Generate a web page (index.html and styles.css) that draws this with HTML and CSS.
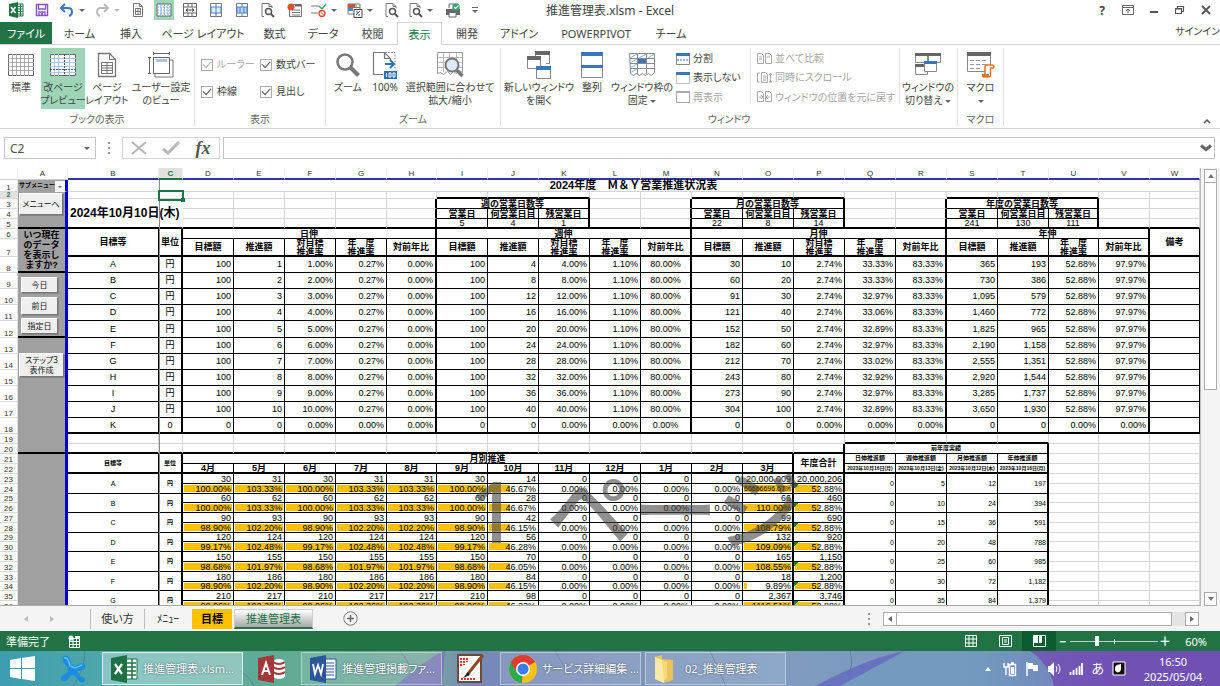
FILE: index.html
```html
<!DOCTYPE html>
<html lang="ja">
<head>
<meta charset="utf-8">
<title>推進管理表.xlsm - Excel</title>
<link rel="stylesheet" href="styles.css">
</head>
<body>
<div class="app">

<header class="titlebar">
  <div class="qat">
    <span class="q"><svg width="16" height="16" viewBox="0 0 16 16"><path d="M9 2h6v12H9" fill="#fff" stroke="#217346"/><path d="M9.500 4.500h5M9.500 7h5M9.500 9.500h5M9.500 12h5M12.500 2v12" stroke="#217346"/><path d="M1 2l9-2v16l-9-2z" fill="#217346"/><path d="M3 5l4.500 6M7.500 5L3 11" stroke="#fff" stroke-width="1.500"/></svg></span>
    <button class="q" aria-label="上書き保存"><svg width="14" height="14" viewBox="0 0 14 14"><path d="M1.500 1.500h11v11h-11z" fill="#fff" stroke="#8a55c0" stroke-width="1.500"/><path d="M3.500 2v4h7V2M4 13V9h6v4" fill="none" stroke="#8a55c0" stroke-width="1.300"/><path d="M7 10v3" stroke="#8a55c0" stroke-width="2"/></svg></button>
    <button class="q split" aria-label="元に戻す"><svg width="16" height="14" viewBox="0 0 16 14"><path d="M6 1L2 5l4 4M2.500 5H9q4 0 4 4 0 3-3 4" fill="none" stroke="#3a76bd" stroke-width="2"/></svg><i class="caret"></i></button>
    <button class="q split dim" aria-label="やり直し"><svg width="16" height="14" viewBox="0 0 16 14"><path d="M10 1l4 4-4 4M13.500 5H7Q3 5 3 9q0 3 3 4" fill="none" stroke="#bbb" stroke-width="2"/></svg><i class="caret"></i></button>
    <button class="q" aria-label="ページ レイアウト"><svg width="12" height="14" viewBox="0 0 12 14"><path d="M1.500.500h6l3 3v10h-9zM7.500.500v3h3M3.500 5.500h5v6h-5zM3.500 8.500h5M6 5.500v6" fill="none" stroke="#777"/></svg></button>
    <button class="q on" aria-label="改ページ プレビュー"><svg width="16" height="14" viewBox="0 0 16 14"><path d="M1 1h14v12H1z" fill="#fff" stroke="#666"/><path d="M1 4h14M1 7h14M1 10h14M5 1v12M8.500 1v12M12 1v12" stroke="#7aa5d6" stroke-dasharray="2 1"/></svg></button>
    <button class="q" aria-label="横方向に結合"><svg width="14" height="14" viewBox="0 0 14 14"><path d="M.500.500h13v13H.500zM.500 4h13M.500 10h13M5 .500V4M9 .500V4M5 10v3.500M9 10v3.500" fill="none" stroke="#666"/><path d="M3 7h8M5 5.500L3 7l2 1.500M9 5.500L11 7 9 8.500" fill="none" stroke="#444"/></svg></button>
    <button class="q" aria-label="セルの結合"><svg width="12" height="14" viewBox="0 0 12 14"><path d="M.500.500h11v13H.500zM6 .500V4M6 10v3.500" fill="none" stroke="#777"/><path d="M1 4h10v6H1z" fill="#dceafb" stroke="#4a87c9"/><path d="M6 4v6" stroke="#4a87c9"/></svg></button>
    <button class="q" aria-label="結合の解除"><svg width="12" height="14" viewBox="0 0 12 14"><path d="M.500.500h11v13H.500zM6 .500V4M6 10v3.500" fill="none" stroke="#777"/><path d="M1 4h10v6H1z" fill="#b7d3f3" stroke="#4a87c9"/><path d="M4 4v6M8 4v6" stroke="#4a87c9"/></svg></button>
    <button class="q" aria-label="印刷プレビュー"><svg width="14" height="15" viewBox="0 0 14 15"><path d="M3 13.500H1V.500h7l3 3V5M8 .500v3h3" fill="none" stroke="#777"/><circle cx="7.500" cy="8.500" r="3" fill="#fff" stroke="#555" stroke-width="1.500"/><path d="M10 11l3 3" stroke="#555" stroke-width="2"/></svg></button>
    <button class="q" aria-label="マクロの記録"><svg width="15" height="14" viewBox="0 0 15 14"><path d="M2.500 1.500h12v12h-12zM5 7h8M5 9.500h8M5 12h8" fill="none" stroke="#777"/><circle cx="4" cy="4" r="3.500" fill="#d8502e"/><path d="M8 2.500h6" stroke="#666" stroke-width="2"/></svg></button>
    <button class="q split wide" aria-label="エラー チェック"><svg width="16" height="14" viewBox="0 0 16 14"><path d="M0 3h8M0 10h7" stroke="#777"/><path d="M8 3l3 3 4-5" fill="none" stroke="#3e9e78" stroke-width="1.500"/><circle cx="11" cy="10.500" r="3" fill="#fff" stroke="#d8502e" stroke-width="1.300"/><path d="M9 8.500l4 4" stroke="#d8502e"/></svg><i class="caret"></i></button>
    <button class="q split wide" aria-label="条件付き書式"><svg width="16" height="15" viewBox="0 0 16 15"><path d="M1 1h12v10H1z" fill="#fff" stroke="#777"/><path d="M1 1h7v3H1z" fill="#d8502e"/><path d="M1 5h5v3H1z" fill="#4a87c9"/><path d="M9 1v4M1 4.500h12" stroke="#777"/><path d="M7 6.500h8v8H7z" fill="#fff" stroke="#444"/><path d="M9 12l4-4M9 9h2M11 12h2" stroke="#444"/></svg><i class="caret"></i></button>
    <button class="q" aria-label="検索"><svg width="14" height="15" viewBox="0 0 14 15"><path d="M3 13.500H1V.500h7l3 3V5M8 .500v3h3" fill="none" stroke="#777"/><circle cx="7.500" cy="8.500" r="3" fill="#fff" stroke="#555" stroke-width="1.500"/><path d="M10 11l3 3" stroke="#555" stroke-width="2"/></svg></button>
    <button class="q split" aria-label="プレビュー"><svg width="14" height="15" viewBox="0 0 14 15"><path d="M3 13.500H1V.500h7l3 3V5M8 .500v3h3" fill="none" stroke="#777"/><circle cx="7.500" cy="8.500" r="3" fill="#fff" stroke="#555" stroke-width="1.500"/><path d="M10 11l3 3" stroke="#555" stroke-width="2"/></svg><i class="caret"></i></button>
    <button class="q" aria-label="クイック印刷"><svg width="16" height="15" viewBox="0 0 16 15"><path d="M4 5V1h5" fill="none" stroke="#666"/><path d="M1 6h14v6H1z" fill="#666"/><path d="M4 9.500h7V14H4z" fill="#fff" stroke="#666"/><circle cx="11" cy="4" r="3.800" fill="#3e9e78"/><path d="M9 4l1.500 1.500 3-3" fill="none" stroke="#fff" stroke-width="1.200"/></svg></button>
    <button class="q tiny" aria-label="カスタマイズ"><svg width="8" height="8" viewBox="0 0 8 8"><path d="M1 1.500h6" stroke="#666"/><path d="M1 4h6L4 7z" fill="#666"/></svg></button>
  </div>
  <div class="doc-title">推進管理表.xlsm - Excel</div>
  <div class="winctl">
    <button class="help" aria-label="ヘルプ">?</button>
    <button aria-label="リボンの表示オプション"><svg width="12" height="10" viewBox="0 0 12 10"><path d="M.500.500h11v9H.500zM.500 2.500h11M6 8V4.500M4 6l2-2 2 2" fill="none" stroke="#666"/></svg></button>
    <button aria-label="最小化"><svg width="10" height="10" viewBox="0 0 10 10"><path d="M1 7h8" stroke="#555" stroke-width="2"/></svg></button>
    <button aria-label="元のサイズに戻す"><svg width="10" height="10" viewBox="0 0 10 10"><path d="M.500 3.500h6v5h-6zM2.500 3.500v-2h6v5h-2M2.500 1.500h6M.500 4h6" fill="none" stroke="#555" stroke-width="1.200"/></svg></button>
    <button aria-label="閉じる"><svg width="10" height="10" viewBox="0 0 10 10"><path d="M1 1l8 8M9 1L1 9" stroke="#555" stroke-width="1.800"/></svg></button>
  </div>
</header>

<nav class="tabs">
  <button class="file">ファイル</button><button>ホーム</button><button>挿入</button><button>ページ レイアウト</button><button>数式</button><button>データ</button><button>校閲</button><button class="active">表示</button><button>開発</button><button>アドイン</button><button class="latin">POWERPIVOT</button><button>チーム</button>
  <a class="signin" href="#">サインイン</a>
</nav>

<section class="ribbon">
  <div class="group g1">
    <div class="tools">
      <button class="big w40"><svg width="28" height="26" viewBox="0 0 28 26"><path d="M1.500 2.500h25v21h-25z" fill="#fff" stroke="#666"/><path d="M1 6.500h26M1 10.500h26M1 14.500h26M1 18.500h26M5.500 2v22M9.500 2v22M13.500 2v22M17.500 2v22M21.500 2v22" stroke="#aaa"/></svg><span>標準</span></button>
      <button class="big w44 on"><svg width="28" height="26" viewBox="0 0 28 26"><path d="M1.500 2.500h25v21h-25z" fill="#f4f9ff" stroke="#666"/><path d="M1 6.500h26M1 10.500h26M1 14.500h26M1 20.500h26M5.500 2v22M9.500 2v22M20.500 2v22" stroke="#a9c7e8"/><path d="M1 17.500h26M15.500 2v22" stroke="#555" stroke-dasharray="2 1"/></svg><span>改ページ<br>プレビュー</span></button>
      <button class="big w44"><svg width="22" height="26" viewBox="0 0 22 26"><path d="M2.500 1.500h11l6 6v17h-17z" fill="#fff" stroke="#777" stroke-width="1.300"/><path d="M13.500 1.500v6h6" fill="none" stroke="#777"/><path d="M5.500 10.500h11v11h-11zM5.500 13.500h11M5.500 16h11M5.500 18.500h11M11 10.500v11" fill="none" stroke="#777"/></svg><span>ページ<br>レイアウト</span></button>
      <button class="big w62"><svg width="28" height="26" viewBox="0 0 28 26"><path d="M8 6v19h18V8h-3" fill="#fff" stroke="#777"/><path d="M6.500 5.500h16v16h-16z" fill="#fff" stroke="#666"/><path d="M9 7h11v3H9z" fill="#a9c4e6"/><path d="M6 1.500h17M6.500 0v3M22.500 0v3M2.500 5v17M1 5.500h3M1 21.500h3" stroke="#666"/></svg><span>ユーザー設定<br>のビュー</span></button>
    </div>
    <div class="caption">ブックの表示</div>
  </div>
  <div class="group g2">
    <div class="checks">
      <label class="off"><input type="checkbox" checked disabled>ルーラー</label>
      <label><input type="checkbox" checked>数式バー</label>
      <label><input type="checkbox" checked>枠線</label>
      <label><input type="checkbox" checked>見出し</label>
    </div>
    <div class="caption">表示</div>
  </div>
  <div class="group g3">
    <div class="tools">
      <button class="big w32"><svg width="26" height="26" viewBox="0 0 26 26"><circle cx="10" cy="10" r="7.500" fill="#fff" stroke="#777" stroke-width="2.500"/><path d="M15.500 15.500l8 8" stroke="#777" stroke-width="4"/></svg><span>ズーム</span></button>
      <button class="big w42"><svg width="26" height="28" viewBox="0 0 26 28"><path d="M11 23.500H1.500v-22h11l6 6V10M12.500 1.500v6h6" fill="#fff" stroke="#777" stroke-width="1.200"/><path d="M13 1.500h10v18" fill="none" stroke="#999" stroke-dasharray="2 1"/><path d="M13 13h9M18 9l4 4-4 4" fill="none" stroke="#2f6fba" stroke-width="2"/><path d="M12 20h13v8H12z" fill="#2f6fba"/><path d="M14.500 22v4M17 22h2v4h-2zM21 22h2v4h-2z" fill="none" stroke="#fff"/></svg><span class="latin">100%</span></button>
      <button class="big w88"><svg width="28" height="28" viewBox="0 0 28 28"><path d="M1.500 1.500h25v20l-3-2-3 3-3-2-3 3-3-3-4 3-3-2-3 1z" fill="#fff" stroke="#999"/><path d="M2 6.500h24M2 11.500h24M2 16.500h24M7.500 2v19M13.500 2v19M20.500 2v19" stroke="#bbb"/><circle cx="16" cy="14" r="6.500" fill="#dceafb" stroke="#777" stroke-width="2"/><path d="M20.500 19l6 6" stroke="#777" stroke-width="3.500"/></svg><span>選択範囲に合わせて<br>拡大/縮小</span></button>
    </div>
    <div class="caption">ズーム</div>
  </div>
  <div class="group g4">
    <div class="tools">
      <button class="big w70"><svg width="26" height="28" viewBox="0 0 26 28"><path d="M9.500 9V1.500h14v11H20" fill="#fff" stroke="#888"/><path d="M9 0h15v4H9z" fill="#666"/><path d="M1.500 6.500h13v11h-13z" fill="#fff" stroke="#888"/><path d="M1 5h14v4H1z" fill="#666"/><path d="M10.500 16.500h14v11h-14z" fill="#fff" stroke="#888"/><path d="M10 15h15v4H10z" fill="#3a76bd"/></svg><span>新しいウィンドウ<br>を開く</span></button>
      <button class="big w36"><svg width="22" height="26" viewBox="0 0 22 26"><path d="M.500.500h21v25H.500z" fill="#fff" stroke="#888"/><path d="M0 0h22v4H0zM0 13h22v3H0z" fill="#3a76bd"/></svg><span>整列</span></button>
      <button class="big w64"><svg width="28" height="26" viewBox="0 0 28 26"><path d="M1.500 1.500h25v19l-3 3-3-2-3 2-3-2-3 2-3-2-3 2-3-2z" fill="#fff" stroke="#888"/><path d="M2 6.500h24M2 11.500h24M2 16.500h24M9.500 2v20M18.500 2v20" stroke="#888"/><path d="M2 6l7-4M2 11l7-4M2 16l7-4M2 21l7-4M11 6l7-4M20 6l6-4" stroke="#8db3dd"/><path d="M10 7h8v4h-8z" fill="#3a76bd"/></svg><span>ウィンドウ枠の<br>固定 <i class="caret"></i></span></button>
      <div class="stack">
        <button><svg width="14" height="12" viewBox="0 0 14 12"><path d="M.500.500h13v11H.500z" fill="#fff" stroke="#888"/><path d="M0 0h14v3H0z" fill="#3a76bd"/><path d="M1 7h12" stroke="#3a76bd" stroke-dasharray="2 1"/></svg>分割</button>
        <button><svg width="14" height="12" viewBox="0 0 14 12"><path d="M.500.500h13v11H.500z" fill="#fff" stroke="#888" stroke-dasharray="1 1"/><path d="M0 0h14v3H0z" fill="#3a76bd"/></svg>表示しない</button>
        <button class="off"><svg width="14" height="12" viewBox="0 0 14 12"><path d="M.500.500h13v11H.500z" fill="#fff" stroke="#aaa"/><path d="M0 0h14v2H0z" fill="#aaa"/></svg>再表示</button>
      </div>
      <div class="stack second">
        <button class="off"><svg width="15" height="12" viewBox="0 0 15 12"><path d="M.500.500h4l2 2v8h-6zM8.500.500h4l2 2v8h-6zM2 4h3M2 6h3M10 4h3" fill="none" stroke="#aaa"/></svg>並べて比較</button>
        <button class="off"><svg width="15" height="12" viewBox="0 0 15 12"><path d="M3 1H.500v9H3M4.500.500h4l2 2v8h-6zM6 4h3M6 6h3M6 8h3M13.500 1v10M12 3l1.500-2L15 3M12 9l1.500 2L15 9" fill="none" stroke="#aaa"/></svg>同時にスクロール</button>
        <button class="off"><svg width="15" height="12" viewBox="0 0 15 12"><path d="M.500.500h4l2 2v8h-6zM8.500.500h4l2 2v8h-6zM2 6h4M9 6h4M4 4l2 2-2 2M11 4L9 6l2 2" fill="none" stroke="#aaa"/></svg>ウィンドウの位置を元に戻す</button>
      </div>
      <button class="big w56"><svg width="28" height="26" viewBox="0 0 28 26"><path d="M1.500 1.500h12v9h-12zM14.500 1.500h12v9h-12zM1.500 13.500h12v9h-12z" fill="#fff" stroke="#888"/><path d="M1 1h13v3H1zM14 1h13v3H14zM1 12h10v3H1z" fill="#666"/><path d="M10.500 9.500h12v10h-12z" fill="#fff" stroke="#888"/><path d="M10 9h13v3H10z" fill="#3a76bd"/></svg><span>ウィンドウの<br>切り替え <i class="caret"></i></span></button>
    </div>
    <div class="caption">ウィンドウ</div>
  </div>
  <div class="group g5">
    <div class="tools">
      <button class="big w45"><svg width="28" height="26" viewBox="0 0 28 26"><path d="M.500.500h23v19H.500z" fill="#fff" stroke="#888"/><path d="M0 0h24v4H0z" fill="#666"/><path d="M3 8.500h18M3 12.500h18M3 16.500h12" stroke="#999" stroke-dasharray="4 2"/><path d="M18 23V14.500q0-1.500 1.500-1.500H26q1.500 1 .5 3h-3v7q0 2-2 2h-5q-1.500-1-.5-2.500z" fill="#fff" stroke="#e0752a" stroke-width="1.500"/><path d="M15 22h7v3h-6z" fill="#e0752a"/></svg><span>マクロ<br><i class="caret"></i></span></button>
    </div>
    <div class="caption">マクロ</div>
  </div>
  <button class="collapse" aria-label="リボンを折りたたむ"><svg width="8" height="6" viewBox="0 0 8 6"><path d="M1 5l3-3 3 3" fill="none" stroke="#555" stroke-width="1.500"/></svg></button>
</section>

<section class="formula">
  <div class="namebox"><input type="text" value="C2" aria-label="名前ボックス"><button aria-label="名前の一覧"><i class="caret"></i></button></div>
  <i class="dots"></i>
  <div class="fxbox">
    <button aria-label="キャンセル"><svg width="16" height="14" viewBox="0 0 16 14"><path d="M1 1l14 12M15 1L1 13" stroke="#b8b8b8" stroke-width="2.200"/></svg></button>
    <button aria-label="入力"><svg width="18" height="14" viewBox="0 0 18 14"><path d="M1 8l5 4L17 1" fill="none" stroke="#b8b8b8" stroke-width="3"/></svg></button>
    <button class="fx" aria-label="関数の挿入">fx</button>
  </div>
  <div class="entry"><input type="text" aria-label="数式"><button aria-label="数式バーの展開"><svg width="12" height="8" viewBox="0 0 12 8"><path d="M1 1.500l5 4 5-4" fill="none" stroke="#666" stroke-width="3"/></svg></button></div>
</section>

<main class="work">
  <div class="sheet">
    <table class="grid" id="grid"></table>
    <div class="freeze"></div>
    <div class="cursor"></div>
    <button class="drop" aria-label="サブメニューの一覧"><i class="caret"></i></button>
    <button class="sbtn b-menu">メニューへ</button>
    <button class="sbtn b-today">今日</button>
    <button class="sbtn b-prev">前日</button>
    <button class="sbtn b-pick">指定日</button>
    <button class="sbtn b-step">ステップ3<br>表作成</button>
    <div class="watermark"><span class="num">1</span>ページ</div>
  </div>
  <div class="vscroll">
    <button aria-label="上へ"><i class="tri up"></i></button>
    <div class="vthumb"></div>
    <button class="end" aria-label="下へ"><i class="tri down"></i></button>
  </div>
</main>

<section class="sheetbar">
  <div class="navs"><button aria-label="前のシート"><i class="tri left"></i></button><button aria-label="次のシート"><i class="tri right"></i></button></div>
  <button class="stab s1">使い方</button>
  <button class="stab s2">ﾒﾆｭｰ</button>
  <button class="stab s3">目標</button>
  <button class="stab s4">推進管理表</button>
  <button class="add" aria-label="新しいシート"><svg width="15" height="15" viewBox="0 0 15 15"><circle cx="7.500" cy="7.500" r="6.700" fill="none" stroke="#777"/><path d="M7.500 4v7M4 7.500h7" stroke="#666" stroke-width="1.500"/></svg></button>
  <i class="dots push"></i>
  <div class="hscroll"><button aria-label="左へ"><i class="tri left"></i></button><div class="hthumb"></div><button class="end" aria-label="右へ"><i class="tri right"></i></button></div>
</section>

<footer class="status">
  <span>準備完了</span>
  <svg class="rec" width="12" height="13" viewBox="0 0 12 13"><path d="M1.500 3.500h10v9h-10zM1.500 6.500h10M1.500 9.500h10M5 4v8M8.500 4v8" fill="none" stroke="#fff"/><circle cx="3" cy="3" r="2.500" fill="#fff"/><path d="M7 2h5" stroke="#fff" stroke-width="2"/></svg>
  <div class="views">
    <button aria-label="標準"><svg width="12" height="12" viewBox="0 0 12 12"><path d="M.500.500h11v11H.500zM.500 4h11M.500 8h11M4 .500v11M8 .500v11" fill="none" stroke="#fff"/></svg></button>
    <button aria-label="ページ レイアウト"><svg width="13" height="12" viewBox="0 0 13 12"><path d="M.500.500h12v11H.500zM3.500 2.500h6v7h-6zM5 5h3M5 7h3" fill="none" stroke="#fff"/></svg></button>
    <button class="on" aria-label="改ページ プレビュー"><svg width="13" height="12" viewBox="0 0 13 12"><path d="M.500.500h12v11H.500z" fill="none" stroke="#fff"/><path d="M1 1h4v7H1zM6 1h3v7H6z" fill="#fff"/></svg></button>
  </div>
  <button class="zb" aria-label="縮小">−</button>
  <input class="zoom" type="range" min="10" max="400" value="125" aria-label="ズーム">
  <button class="zb" aria-label="拡大">＋</button>
  <span class="pct">60%</span>
</footer>

<footer class="taskbar">
  <svg class="wall" viewBox="0 0 1220 35" preserveAspectRatio="none"><path d="M395 35Q430 5 445 0l-3 35z" fill="#7a68bd" opacity=".7"/><path d="M820 35Q880 8 910 0H1030q18 10 24 35z" fill="#6f9cc0" opacity=".6"/><path d="M1030 0q20 14 24 35h166V0z" fill="#7152b4" opacity=".75"/><path d="M815 35Q870 6 905 0L840 35z" fill="#5a4cc0" opacity=".5"/><path d="M85 0q0 18-12 35M240 20q10 6 14 15M400 0l14 20M555 0l12 20M710 0l16 35M850 0q4 14-2 24" fill="none" stroke="#5c6c9c" opacity=".7"/></svg>
  <button class="start" aria-label="スタート"><svg width="25" height="25" viewBox="0 0 25 25"><path d="M0 4l11-2v10H0zM12 2l13-2v12H12zM0 13h11v10L0 21zM12 13h13v12l-13-2z" fill="#fff"/></svg></button>
  <button class="ico splash" aria-label="アプリ"><svg width="28" height="30" viewBox="0 0 28 30"><path d="M4 3q3-3 6 0 2 3 2 7l4 2q5-4 9-2 3 3 0 5-4 2-7 2l3 5q6 1 5 5-3 3-6 0l-5-6-4 1q-2 6-7 5-4-2-1-5l6-4-1-6Q2 8 4 3z" fill="#1d8be0"/><path d="M5 4q3-1 4 2l2 6 5 2 7-3" fill="none" stroke="#63c0f5" stroke-width="1.500"/></svg></button>
  <button class="task act"><svg width="27" height="28" viewBox="0 0 27 28"><path d="M15 4h11v20H15z" fill="#fff" stroke="#217346"/><path d="M16 8h9M16 12h9M16 16h9M16 20h9M21 4v20" stroke="#217346" stroke-width="1.500"/><path d="M0 3l16-3v28L0 25z" fill="#1e7145"/><path d="M4 9l7 10M11 9L4 19" stroke="#fff" stroke-width="2.200"/></svg><span>推進管理表.xlsm...</span></button>
  <button class="ico access" aria-label="Access"><svg width="28" height="28" viewBox="0 0 28 28"><path d="M15 6q6-4 12 0v16q-6 4-12 0z" fill="#fff"/><path d="M15 7q6 4 12 0M15 12q6 4 12 0M15 17q6 4 12 0" fill="none" stroke="#a4373a" stroke-width="2"/><path d="M0 3l16-3v28L0 25z" fill="#a4373a"/><path d="M4 20l4-12 4 12M5.500 16h5" fill="none" stroke="#fff" stroke-width="2"/></svg></button>
  <button class="task"><svg width="27" height="28" viewBox="0 0 27 28"><path d="M15 4h11v20H15z" fill="#fff" stroke="#2b579a"/><path d="M16 8h8M16 11h8M16 14h8M16 17h8M16 20h8" stroke="#2b579a"/><path d="M0 3l16-3v28L0 25z" fill="#2b579a"/><path d="M3 9l2 10 3-9 3 9 2-10" fill="none" stroke="#fff" stroke-width="1.800"/></svg><span>推進管理掲載ファ...</span></button>
  <button class="ico paint" aria-label="エディター"><svg width="28" height="29" viewBox="0 0 28 29"><path d="M1 1h23v27H1z" fill="#fff" stroke="#6a4a3a" stroke-width="2"/><path d="M4 4v8M7 4v7M10 4v4M4 25h14" stroke="#d33" stroke-width="2" stroke-dasharray="2 1"/><path d="M26 1L10 21" stroke="#8a4a20" stroke-width="3"/><path d="M11 18l-5 6 7-3z" fill="#222"/></svg></button>
  <button class="task"><svg width="28" height="28" viewBox="0 0 28 28"><circle cx="14" cy="14" r="14" fill="#fbc116"/><path d="M14 14L1.900 7A14 14 0 0 1 26.100 7z" fill="#e33b2e"/><path d="M14 14L1.900 7A14 14 0 0 0 13 28z" fill="#2da94f"/><path d="M14 7h12.100A14 14 0 0 0 1.900 7L8 17.500z" fill="#e33b2e"/><circle cx="14" cy="14" r="7" fill="#fff"/><circle cx="14" cy="14" r="5.500" fill="#3b7ded"/></svg><span>サービス詳細編集 ...</span></button>
  <button class="task folder"><svg width="20" height="28" viewBox="0 0 20 28"><path d="M1 2l7-2v4l11 1v20l-9 3-9-4z" fill="#e8c45a"/><path d="M1 2l9 4v22l-9-4z" fill="#f9e9a4"/><path d="M8 5l5 2v16l-3 3z" fill="#f3d97c"/></svg><span>02_推進管理表</span></button>
  <div class="tray">
    <i class="tri up light"></i>
    <svg width="14" height="16" viewBox="0 0 14 16"><path d="M6.500 3.500h6v11h-6zM8 2h3M1 2v4h4V2M3 6v8" fill="none" stroke="#fff" stroke-width="1.400"/><path d="M8 6h3v7H8z" fill="#fff"/></svg>
    <svg width="14" height="16" viewBox="0 0 14 16"><path d="M2 1v14" stroke="#fff" stroke-width="1.500"/><path d="M3 2h5v2h5v6H8V8H3z" fill="#fff"/></svg>
    <svg width="14" height="16" viewBox="0 0 14 16"><path d="M1 5h2l4-4v14l-4-4H1z" fill="#fff"/><path d="M9 5q2 3 0 6M11 3q4 5 0 10" fill="none" stroke="#fff"/></svg>
    <svg width="14" height="14" viewBox="0 0 14 14"><path d="M1.500 10v3M4.500 8v5M7.500 6v7M10.500 4v9M13 1v12" stroke="#fff" stroke-width="1.800"/></svg>
    <span class="ime">あ</span>
    <svg width="14" height="15" viewBox="0 0 14 15"><path d="M1 1h12v13H1z" fill="#111" stroke="#fff"/><path d="M8.500 3v5q0 3-3 3-3-1-2-4 0-2 2-3" fill="#fff" stroke="#fff"/></svg>
  </div>
  <div class="clock">16:50<br>2025/05/04</div>
</footer>
</div>
<script src="grid.js"></script>
</body>
</html>
```
FILE: styles.css
```css
* { box-sizing: border-box; }
body {
  margin: 0;
  font: 11px/13px "Noto Sans", "Noto Sans CJK JP", sans-serif;
  color: #444;
  background: #fff;
}
button { font: inherit; color: inherit; border: 0; background: none; padding: 0; margin: 0; display: inline-flex; align-items: center; justify-content: center; }
input { font: inherit; color: inherit; }
svg { flex: none; display: block; }
.app { height: 100vh; display: flex; flex-direction: column; overflow: hidden; font-feature-settings: "palt"; }
.caret { display: inline-block; border: 3px solid transparent; border-top-color: #666; border-bottom: 0; vertical-align: middle; }

/* title bar */
.titlebar { display: grid; grid-template-columns: 1fr auto 1fr; height: 22px; flex: none; }
.qat { display: flex; padding-left: 3px; height: 20px; }
.q { width: 26px; height: 20px; display: inline-flex; align-items: center; justify-content: center; }
.q.on { background: linear-gradient(#9fd5b7, #9fd5b7) center / 20px 20px no-repeat; }
.q.split { width: 35px; justify-content: flex-start; padding-left: 4px; gap: 4px; }
.q.wide { width: 36px; }
.q.dim .caret { border-top-color: #bbb; }
.q.tiny { width: 18px; }
.doc-title { font-size: 12px; line-height: 22px; color: #444; }
.winctl { display: flex; justify-content: flex-end; height: 20px; padding-right: 1px; }
.winctl button { width: 26px; }
.help { font-weight: bold; font-size: 12px; }

/* ribbon tabs */
.tabs { flex: none; display: grid; height: 23px; grid-template-columns: 52px 55px 48px 96px 47px 50px 49px 45px 50px 54px 100px 50px 1fr; border-bottom: 1px solid #d4d4d4; }
.tabs .file { background: #217346; color: #fff; }
.tabs .active { color: #217346; background: #fff; border: 1px solid #d4d4d4; border-bottom: 0; margin-bottom: -1px; }
.signin { justify-self: end; color: #444; text-decoration: none; line-height: 18px; font-size: 10px; }

/* ribbon */
.ribbon { flex: none; display: flex; height: 84px; border-bottom: 1px solid #d4d4d4; position: relative; padding-top: 2px; }
.group { display: flex; flex-direction: column; border-right: 1px solid #e1e1e1; height: 78px; margin-top: 1px; }
.g1 { width: 195px; }
.g2 { width: 131px; }
.g3 { width: 175px; }
.g4 { width: 457px; }
.g5 { width: 46px; }
.tools { display: flex; flex: 1; align-items: flex-start; }
.g1 .tools { padding-left: 1px; }
.g3 .tools { padding-left: 6px; }
.g4 .tools { padding-left: 3px; }
.caption { text-align: center; color: #666; line-height: 14px; font-size: 10px; }
.big { flex: none; flex-direction: column; justify-content: flex-start; height: 61px; padding-top: 3px; gap: 2px; font-size: 10px; white-space: nowrap; }
.big svg { height: 28px; }
.big.on { background: #9fd5b7; }
.w32 { width: 32px; }
.w36 { width: 36px; }
.w40 { width: 40px; }
.w42 { width: 42px; }
.w44 { width: 44px; }
.w45 { width: 45px; }
.w56 { width: 56px; }
.w62 { width: 64px; }
.w64 { width: 64px; }
.w70 { width: 70px; }
.w88 { width: 88px; }
.checks { flex: 1; display: grid; grid-template-columns: 59px 1fr; grid-template-rows: 27px 27px; padding: 3px 0 0 6px; align-items: center; }
.checks label { display: flex; align-items: center; gap: 4px; white-space: nowrap; font-size: 10px; }
.checks input { appearance: none; width: 12px; height: 12px; margin: 0; border: 1px solid #ababab; background: #fff; display: grid; place-items: center; }
.checks input::after { content: ""; width: 7px; height: 4px; border: solid #555; border-width: 0 0 1px 1px; transform: rotate(-48deg); margin-bottom: 2px; }
.off, .checks .off { color: #a6a6a6; }
.checks .off input::after { border-color: #b5b5b5; }
.stack { display: flex; flex-direction: column; gap: 6px; padding: 4px 0 0 2px; width: 77px; height: 56px; border-right: 1px solid #e1e1e1; }
.stack.second { width: 149px; padding-left: 6px; }
.stack button { height: 14px; justify-content: flex-start; gap: 3px; white-space: nowrap; font-size: 10px; }
.collapse { position: absolute; right: 9px; bottom: 4px; }

/* formula bar */
.formula { flex: none; display: flex; height: 39px; padding: 8px 5px 9px 4px; }
.namebox { width: 92px; display: flex; border: 1px solid #c6c6c6; }
.namebox input { width: 74px; border: 0; padding: 0 5px; font-size: 12px; outline: 0; color: #555; }
.namebox button { width: 16px; }
.dots { width: 2px; height: 12px; margin: 5px 12px; background: repeating-linear-gradient(#999 0 2px, transparent 2px 5px); }
.fxbox { display: flex; width: 98px; border: 1px solid #d4d4d4; margin-right: 3px; }
.fxbox button { flex: 1; }
.fx { font: italic bold 18px/18px "Liberation Serif", serif; color: #555; }
.entry { flex: 1; display: flex; border: 1px solid #c6c6c6; }
.entry input { flex: 1; border: 0; outline: 0; }
.entry button { width: 16px; }

/* worksheet */
.work { flex: 1; min-height: 0; display: flex; }
.sheet { flex: 1; position: relative; overflow: hidden; border-right: 1px solid #bbb; border-bottom: 1px solid #ababab; }
.grid { table-layout: fixed; border-collapse: separate; border-spacing: 0; width: 100%; color: #000; font: 9px/9px "Liberation Sans", "Noto Sans CJK JP", sans-serif; font-feature-settings: normal; }
.grid th { padding: 0; font-size: 8px; font-weight: normal; color: #333; border-right: 1px solid #e1e1e1; vertical-align: middle; }
.grid tbody th { border-bottom: 1px solid #d8d8d8; line-height: 7px; vertical-align: bottom; }
.grid tbody th.sel { font-size: 7px; line-height: 6px; }
.grid thead th { border-right-color: #eee; border-bottom: 1px solid #ccc; }
.grid thead th.blue { border-bottom: 2px solid #3434a4; }
.grid th.sel { background: #e1e1e1; color: #217346; font-weight: bold; }
.grid thead th.sel { border-bottom: 2px solid #217346; }
.grid td { padding: 0 2px; border-right: 1px solid #d4d4d4; border-bottom: 1px solid #d4d4d4; text-align: right; white-space: nowrap; }
.grid td.k { border-right-color: #000; border-bottom-color: #000; }
.grid td.r2 { border-right: 2px solid #000; }
.grid td.b2 { border-bottom: 2px solid #000; }
.grid td.c { text-align: center; padding: 0; }
.grid td.h { line-height: 8px; font-weight: bold; }
.grid td.s { font-size: 6px; line-height: 7px; font-weight: bold; }
.grid td.d { font-size: 5px; }
.grid td.n { font-size: 7px; line-height: 7px; padding: 0 1px; }
.grid td.low { line-height: 8px; }
.grid td.low.r2 { padding: 0 1px; }
.grid td.title { font-size: 11px; line-height: 10px; font-weight: bold; text-align: center; vertical-align: top; }
.grid td.date { font-size: 12px; line-height: 14px; font-weight: bold; text-align: left; border-right-color: #fff; }
.grid td.a { background: #a0a0a0; border-right: 3px solid #0000d0; border-bottom-color: #a0a0a0; padding: 0; }
.grid td.a.b2 { border-bottom-color: #000; }
.grid td.ask { text-align: center; line-height: 10px; font-weight: bold; }
.grid td.sub { text-align: left; font-size: 6px; font-weight: bold; padding-left: 1px; }
.grid td.bar { background: linear-gradient(#ffc000, #ffc000) 1px 1px / calc(var(--bar) - 2px) calc(100% - 2px) no-repeat; }
.grid td.flag { background: linear-gradient(135deg, #0a7a2a 3px, transparent 3px), linear-gradient(#ffc000, #ffc000) 1px 1px / calc(var(--bar) - 2px) calc(100% - 2px) no-repeat; }
.grid td.tight { font-size: 7px; }
.two { height: 16px; overflow: hidden; line-height: 9px; }
.freeze { position: absolute; left: 159px; top: 12px; bottom: 0; width: 1px; background: #8a8a8a; }
.cursor { position: absolute; left: 158px; top: 22px; width: 26px; height: 11px; border: 2px solid #217346; }
.cursor::after { content: ""; position: absolute; right: -3px; bottom: -3px; width: 4px; height: 4px; background: #217346; }
.drop { position: absolute; left: 55px; top: 13px; width: 10px; height: 11px; background: #f6f6f6; }
.drop .caret { border-width: 2px 2px 0; }
.sbtn { position: absolute; background: #efefef; border: 1px solid; border-color: #fff #777 #777 #fff; box-shadow: 1px 1px #888; color: #111; font-size: 8px; line-height: 10px; white-space: nowrap; }
.b-menu { left: 19px; top: 25px; width: 44px; height: 22px; }
.b-today { left: 21px; top: 109px; width: 37px; height: 16px; }
.b-prev { left: 21px; top: 129px; width: 37px; height: 18px; }
.b-pick { left: 21px; top: 150px; width: 37px; height: 16px; }
.b-step { left: 19px; top: 185px; width: 45px; height: 24px; }
.watermark { position: absolute; left: 469px; top: 294px; font: 86px/88px "Noto Sans CJK JP", sans-serif; font-weight: 500; font-feature-settings: normal; color: rgba(70, 70, 70, .6); white-space: nowrap; pointer-events: none; }
.watermark .num { font-family: "Noto Sans", sans-serif; margin-right: 28px; }

/* scroll bars */
.tri { display: block; border: 3px solid transparent; }
.tri.up { border-bottom: 4px solid #777; border-top: 0; }
.tri.down { border-top: 4px solid #777; border-bottom: 0; }
.tri.left { border-right: 4px solid #666; border-left: 0; }
.tri.right { border-left: 4px solid #666; border-right: 0; }
.vscroll { width: 19px; background: #f4f4f4; display: flex; flex-direction: column; padding: 1px 3px 0; }
.vscroll button { width: 13px; height: 14px; border: 1px solid #ababab; background: #fff; }
.vthumb { width: 13px; height: 207px; border: 1px solid #ababab; border-top: 0; background: #fff; }
.vscroll .end { margin-top: auto; }
.sheetbar { flex: none; height: 25px; background: #f4f4f4; display: flex; align-items: center; padding-right: 21px; }
.navs { width: 90px; display: flex; gap: 22px; padding-left: 24px; opacity: .4; }
.stab { height: 20px; border-left: 1px solid #bbb; font-size: 11px; color: #333; }
.s1 { width: 54px; }
.s2 { width: 47px; }
.s3 { width: 40px; background: #ffc000; color: #000; border-left: 0; margin: 0 2px 0 1px; font-weight: bold; }
.s4 { width: 79px; background: linear-gradient(#fff, #a8a8a8); color: #217346; border: 1px solid #ccc; border-bottom: 2px solid #217346; }
.add { margin-left: 30px; }
.push { margin: 0 13px 0 auto; }
.hscroll { display: flex; width: 316px; background: #e4e4e4; height: 14px; }
.hscroll button { width: 14px; border: 1px solid #ababab; background: #fff; }
.hscroll .end { margin-left: auto; }
.hthumb { width: 275px; border: 1px solid #ababab; background: #fff; border-left: 0; }

/* status bar */
.status { flex: none; height: 20px; background: #217346; color: #fff; display: flex; align-items: center; padding-left: 6px; }
.rec { margin-left: 18px; }
.views { margin-left: auto; display: flex; height: 20px; }
.views button { width: 34px; }
.views .on { background: #0c5c32; }
.zb { width: 14px; font-size: 12px; font-weight: bold; }
.zoom { appearance: none; width: 88px; height: 14px; margin: 0; background: linear-gradient(#fff, #fff) center / 1px 5px no-repeat, linear-gradient(#b9d3c4, #b9d3c4) center / 100% 1px no-repeat; }
.zoom::-webkit-slider-thumb { appearance: none; width: 4px; height: 10px; background: #fff; }
.pct { width: 48px; text-align: center; }

/* taskbar */
.taskbar { flex: none; height: 35px; position: relative; display: flex; align-items: center; color: #fff; background: linear-gradient(90deg, #3c9cb0 0, #57aca8 12%, #62ab94 24%, #78a8a0 35%, #7688b8 39%, #7d94ba 52%, #7f9cc0 64%, #7797bd 80%, #7055b6 90%, #6b4cae 100%); }
.wall { position: absolute; inset: 0; width: 100%; height: 100%; }
.taskbar > :not(.wall) { position: relative; }
.start { width: 44px; }
.ico { width: 58px; height: 33px; }
.task { width: 141px; height: 33px; border: 1px solid rgba(255, 255, 255, .4); background: rgba(255, 255, 255, .12); justify-content: flex-start; padding-left: 8px; gap: 5px; overflow: hidden; white-space: nowrap; text-shadow: 0 0 2px #345; }
.task.act { background: rgba(255, 255, 255, .32); border-color: rgba(255, 255, 255, .7); }
.folder { margin-left: 4px; gap: 11px; }
.tray { margin-left: auto; display: flex; align-items: center; gap: 8px; }
.tri.light { border-bottom-color: #fff; margin-right: 4px; }
.ime { font-size: 13px; }
.clock { width: 94px; text-align: center; line-height: 15px; }
```
FILE: grid.js
```js
const table = document.getElementById('grid');
const letters = 'ABCDEFGHIJKLMNOPQRSTUVW'.split('');
const widths = { A: 50, B: 91, C: 24, H: 50, U: 50 };
const heights = { 1: 12, 2: 7, 7: 18, 12: 17, 25: 9, 29: 9, 34: 9 };
const rowHeight = n => heights[n] || (n >= 8 && n <= 18 ? 16 : 10);

// A cell: text, class list, column span, row span, extra style
const td = (text = '', cls = '', cs = 1, rs = 1, style = '') =>
  `<td class="${cls}"${cs > 1 ? ` colspan="${cs}"` : ''}${rs > 1 ? ` rowspan="${rs}"` : ''}${style ? ` style="${style}"` : ''}>${text}</td>`;
const blanks = (n, cls = '') => td('', cls).repeat(n);
const two = (a, b) => `<div class="two">${a}<br>${b}</div>`;
const pct = v => v + '%';

const rows = {};

rows[1] = td('サブメニュー', 'a sub') + td('2024年度　Ｍ＆Ｙ営業推進状況表', 'title', 22);
rows[2] = td('', 'a b2', 1, 4) + blanks(7) + blanks(3, 'b2') + blanks(2) + blanks(3, 'b2') + blanks(2) + blanks(3, 'b2') + blanks(2);

const days = (fn) => fn(0) + blanks(1) + td('', 'r2') + fn(1) + blanks(1) + td('', 'r2') + fn(2) + blanks(2);
const lead = blanks(4) + td('', 'r2');
rows[3] = td('2024年10月10日(木)', 'date b2', 2, 3) + lead + days(i => td(['週', '月', '年度'][i] + 'の営業日数等', 'k r2 c h', 3));
rows[4] = lead + days(() => td('営業日', 'k c h') + td('何営業日目', 'k c h') + td('残営業日', 'k r2 c h'));
const counts = [[5, 4, 1], [22, 8, 14], [241, 130, 111]];
rows[5] = blanks(4, 'b2') + td('', 'b2 r2') + counts.map((c, i) =>
  td(c[0], 'k b2 c low') + td(c[1], 'k b2 c low') + td(c[2], 'k b2 r2 c low') + td('', 'b2') + (i < 2 ? td('', 'b2 r2') : td('', 'b2'))).join('');

rows[6] = td('いつ現在<br>のデータ<br>を表示し<br>ますか?', 'a ask b2', 1, 3)
  + td('目標等', 'k b2 c h', 1, 2) + td('単位', 'k b2 r2 c h', 1, 2)
  + td('日伸', 'k r2 c h', 5) + td('週伸', 'k r2 c h', 5) + td('月伸', 'k r2 c h', 5) + td('年伸', 'k r2 c h', 4)
  + td('備考', 'k b2 c h', 1, 2);
const head = td('目標額', 'k b2 c h') + td('推進額', 'k b2 c h');
const ratio = td(two('対目標', '推進率'), 'k b2 c h');
const tail = td(two('年　度', '推進率'), 'k b2 c h') + td('対前年比', 'k b2 r2 c h');
rows[7] = (head + ratio + tail).repeat(3) + head + tail;

const monthGoal = [30, 60, 91, 121, 152, 182, 212, 243, 273, 304];
const monthRate = ['33.33', '33.33', '32.97', '33.06', '32.89', '32.97', '33.02', '32.92', '32.97', '32.89'];
for (let i = 1; i <= 11; i++) {
  const z = i === 11;
  const b = z ? ' b2' : '';
  const v = z
    ? [0, 0, '0.00%', '0.00%', '0.00%', 0, 0, '0.00%', '0.00%', '0.00%', 0, 0, '0.00%', '0.00%', '0.00%', 0, 0, '0.00%', '0.00%']
    : [100, i, pct(i + '.00'), '0.27%', '0.00%', 100, 4 * i, pct(4 * i + '.00'), '1.10%', '80.00%',
       monthGoal[i - 1], 10 * i, '2.74%', pct(monthRate[i - 1]), '83.33%',
       (365 * i).toLocaleString('en'), (193 * i).toLocaleString('en'), '52.88%', '97.97%'];
  const a = i === 2 ? td('', 'a b2', 1, 4) : i === 6 ? td('', 'a b2', 1, 8) : '';
  rows[7 + i] = a + td(letters[i - 1], 'k c' + b) + td(z ? 0 : '円', 'k r2 c' + b)
    + v.map((x, n) => td(x, 'k' + b + ([4, 9, 14, 18].includes(n) ? ' r2' : '') + (n === 9 ? ' c' : ''))).join('') + td('', 'k' + b);
}

rows[19] = blanks(15) + blanks(4, 'b2') + blanks(3);
rows[20] = blanks(14, 'b2') + td('', 'b2 r2') + td('前年度実績', 'k r2 c s', 4) + blanks(3);
rows[21] = td('', 'a', 1, 16) + td('目標等', 'k b2 c s', 1, 2) + td('単位', 'k b2 r2 c s', 1, 2)
  + td('月別推進', 'k r2 c h', 12) + td('年度合計', 'k b2 r2 c h', 1, 2)
  + ['日', '週', '月'].map(x => td(x + '伸推進額', 'k c s')).join('') + td('年伸推進額', 'k r2 c s') + blanks(3);
rows[22] = [4, 5, 6, 7, 8, 9, 10, 11, 12, 1, 2].map(m => td(m + '月', 'k b2 c h')).join('') + td('3月', 'k b2 r2 c h')
  + ['16日(月)', '13日(金)', '12日(木)'].map(x => td('2023年10月' + x, 'k b2 c s d')).join('') + td('2023年10月16日(月)', 'k b2 r2 c s d') + blanks(3);

// name, short month, long month, October, March, total, and the matching rates
const plan = [
  ['A', 30, 31, 14, '20,000,009', '20,000,206', '100.00', '103.33', '46.67', '66666696.67'],
  ['B', 60, 62, 28, '66', '460', '100.00', '103.33', '46.67', '110.00'],
  ['C', 90, 93, 42, '99', '690', '98.90', '102.20', '46.15', '108.79'],
  ['D', 120, 124, 56, '132', '920', '99.17', '102.48', '46.28', '109.09'],
  ['E', 150, 155, 70, '165', '1,150', '98.68', '101.97', '46.05', '108.55'],
  ['F', 180, 186, 84, '18', '1,200', '98.90', '102.20', '46.15', '9.89'],
  ['G', 210, 217, 98, '2,367', '3,746', '99.06', '102.36', '46.23', '1116.51']
];
const barCell = (rate, cls = '') =>
  td(pct(rate), 'k low bar' + cls, 1, 1, `--bar:${Math.min(100, parseFloat(rate))}%`);
plan.forEach((p, i) => {
  const [name, s, l, oct, mar, total, rs, rl, ro, rm] = p;
  const n = 23 + 2 * i;
  rows[n] = td(name, 'k c n', 1, 2) + td('円', 'k r2 c s', 1, 2)
    + [s, l, s, l, l, s, oct, 0, 0, 0, 0].map(x => td(x, 'k low')).join('') + td(mar, 'k low r2') + td(total, 'k low r2')
    + td(0, 'k n', 1, 2) + td(5 * (i + 1), 'k n', 1, 2) + td(12 * (i + 1), 'k n', 1, 2)
    + td((197 * (i + 1)).toLocaleString('en'), 'k r2 n', 1, 2) + blanks(3);
  rows[n + 1] = [rs, rl, rs, rl, rl, rs, ro, '0.00', '0.00', '0.00', '0.00'].map(x => barCell(x)).join('')
    + barCell(rm, ' r2' + (rm.length > 8 ? ' tight' : '')) + barCell('52.88', ' r2 flag') + blanks(3);
});

const colTags = '<col style="width:18px">' + letters.map(c => `<col${c === 'W' ? '' : ` style="width:${widths[c] || 51}px"`}>`).join('');
const headCells = '<th></th>' + letters.map(c => `<th class="${c === 'C' ? 'sel' : c === 'A' ? '' : 'blue'}">${c}</th>`).join('');
let bodyRows = '';
for (let n = 1; n <= 36; n++) {
  bodyRows += `<tr style="height:${rowHeight(n)}px"><th class="${n === 2 ? 'sel' : ''}">${n}</th>${rows[n]}</tr>`;
}
table.innerHTML = `<colgroup>${colTags}</colgroup><thead><tr style="height:12px">${headCells}</tr></thead><tbody>${bodyRows}</tbody>`;
```
